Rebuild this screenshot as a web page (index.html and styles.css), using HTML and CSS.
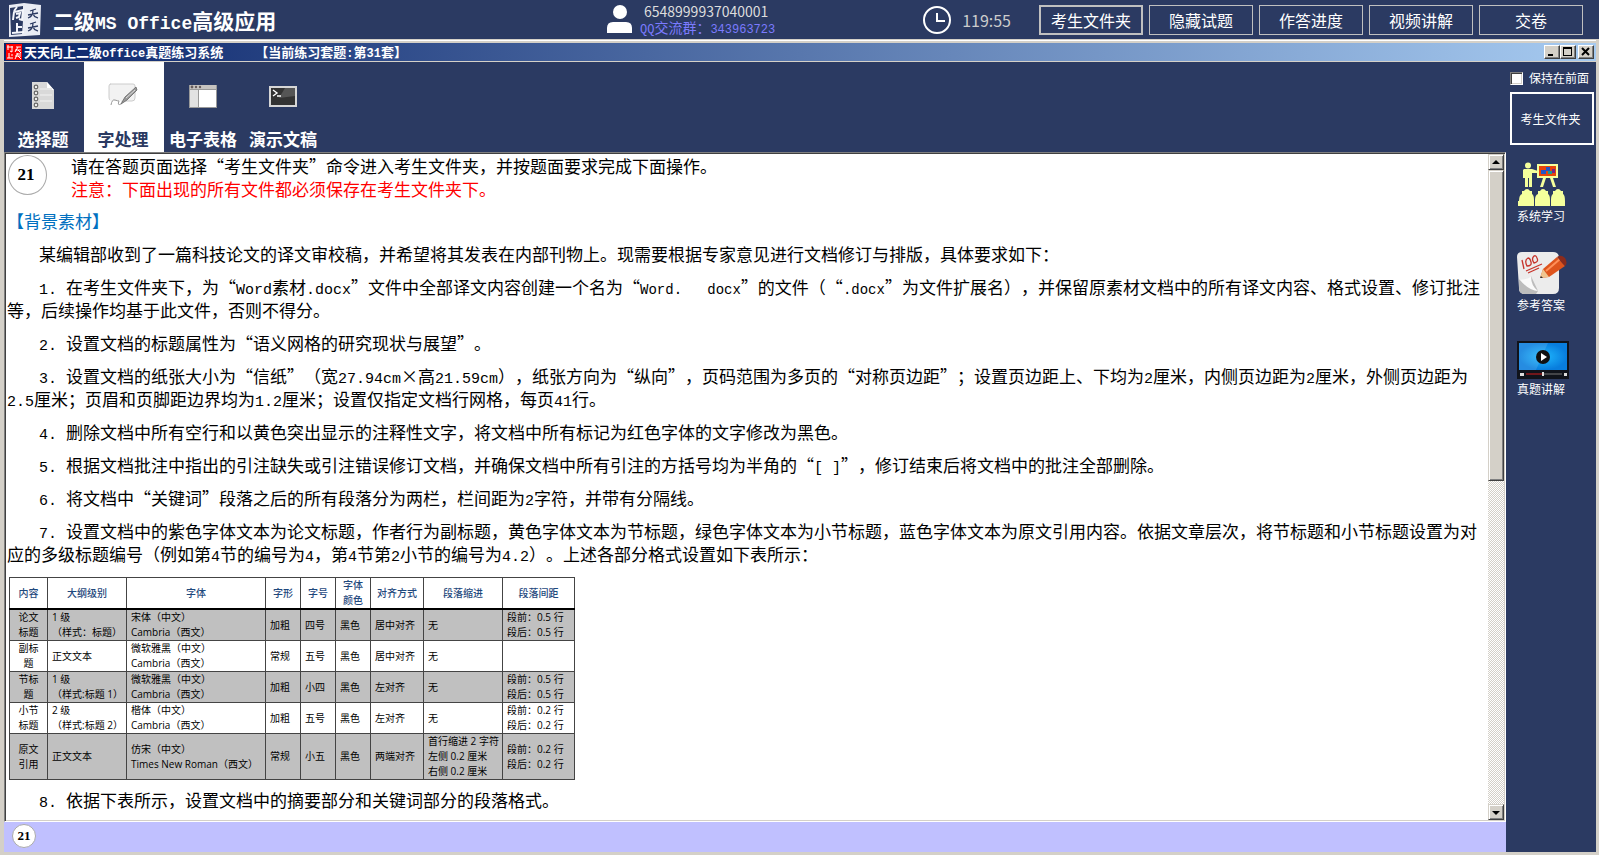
FILE: index.html
```html
<!DOCTYPE html>
<html lang="zh-CN">
<head>
<meta charset="utf-8">
<title>二级MS Office高级应用</title>
<link rel="stylesheet" href="styles.css">
</head>
<body>
<header class="topbar">
  <div class="brand">
    <svg class="logo" viewBox="0 0 34 34" aria-hidden="true">
      <path d="M1 2 16 0 33 2 32 32 17 33 1 34Z" fill="#e9ecf4"/>
      <path d="M2 5 15 3 15 18 14 31 3 32Z" fill="#2b3a62"/>
      <g fill="none" stroke="#f4f6fb" stroke-width="2">
        <path d="M9 4 6 8M5 17 6 9l9-2-1 10-3-1M8 11l4-1-1 4-3 1M9 20v9M9 24h5M4 30l12-1" />
      </g>
      <g fill="none" stroke="#2b3a62" stroke-width="1.3">
        <path d="M22 8l6-2M20 12l10-2M25 7c0 4-2 7-5 8M25 11c1 3 2 3 5 4M22 21l6-2M20 25l10-2M25 20c0 4-2 7-5 8M25 24c1 3 2 3 5 4"/>
      </g>
    </svg>
    <h1 class="brand-title">二级<span class="latin">MS Office</span>高级应用</h1>
  </div>
  <div class="user">
    <svg class="user-icon" viewBox="0 0 26 29" aria-hidden="true"><circle cx="13" cy="7" r="7" fill="#fff"/><path d="M0 28v-5q0-6 6-6h13q6 0 6 6v5Z" fill="#fff"/></svg>
    <div class="user-text">
      <div class="user-id">6548999937040001</div>
      <div class="user-group"><span class="latin">QQ</span>交流群：<span class="latin">343963723</span></div>
    </div>
  </div>
  <div class="timer">
    <svg class="clock" viewBox="0 0 30 30" aria-hidden="true"><circle cx="15" cy="15" r="13" fill="none" stroke="#fff" stroke-width="2"/><path d="M15 8v8h8" fill="none" stroke="#fff" stroke-width="2"/></svg>
    <span>119:55</span>
  </div>
  <nav class="actions">
    <button class="action current">考生文件夹</button>
    <button class="action">隐藏试题</button>
    <button class="action">作答进度</button>
    <button class="action">视频讲解</button>
    <button class="action">交卷</button>
  </nav>
</header>

<div class="window">
  <div class="titlebar">
    <svg class="seal" viewBox="0 0 16 16" aria-hidden="true"><path d="M0 0h16v16H0Z" fill="#f00"/><path d="M2 1v5M1 3h6M6 2v6l-2-1M3 9v5M1 14h6M5 11h2M10 3h5M9 6h6M12 3l-3 5M12 6l3 3M10 10h5M9 12h6M12 9l-3 6M12 12l3 3" fill="none" stroke="#fff" stroke-width="1"/></svg>
    <span class="title-name">天天向上二级<span class="latin">office</span>真题练习系统</span>
    <span class="title-set">【当前练习套题<span class="latin">:</span>第<span class="latin">31</span>套】</span>
    <div class="window-buttons">
      <button class="wbtn" aria-label="最小化"><svg viewBox="0 0 12 10"><path d="M2 7h5v2H2Z"/></svg></button>
      <button class="wbtn" aria-label="最大化"><svg viewBox="0 0 12 10"><path d="M1 0h9v9H1ZM2 2v6h7V2Z" fill-rule="evenodd"/></svg></button>
      <button class="wbtn close" aria-label="关闭"><svg viewBox="0 0 12 10"><path d="M2 1l7 7M9 1 2 8" stroke="#000" stroke-width="2"/></svg></button>
    </div>
  </div>

  <div class="workspace">
    <main class="main">
      <nav class="tabs">
        <button class="tab">
          <svg viewBox="0 0 32 32" aria-hidden="true"><path d="M5 2h15l7 8v19H5Z" fill="#d9d9d9"/><path d="M20 2l7 8h-5q-2 0-2-2Z" fill="#fff"/><path d="M13 9h12M13 15h12M13 21h12" stroke="#e6e6e6" stroke-width="2"/><g fill="#eee" stroke="#666" stroke-width="1.2"><circle cx="9" cy="7" r="1.8"/><circle cx="9" cy="13" r="1.8"/><circle cx="9" cy="19" r="1.8"/><circle cx="9" cy="25" r="1.8"/></g></svg>
          <span>选择题</span>
        </button>
        <button class="tab selected">
          <svg viewBox="0 0 32 32" aria-hidden="true"><path d="M3 4h23q2 0 2 2v12q0 3-3 3H14M3 20q-1-1-1-3V6q0-2 2-2" fill="#f2f2f2" stroke="#ccc"/><path d="M3 5h24v13L14 21H3Z" fill="#f2f2f2"/><path d="M29 7 18 17l-4 7 6-4L30 10Z" fill="#999" stroke="#666" stroke-width=".8"/><path d="M28 10 19 18" stroke="#ddd"/><path d="M4 25q1-6 4-5t4 1q-2 5 2 3" fill="none" stroke="#999"/></svg>
          <span>字处理</span>
        </button>
        <button class="tab">
          <svg viewBox="0 0 32 32" aria-hidden="true"><path d="M2 5h28v23H2Z" fill="#999"/><path d="M3 5h26v4H3Z" fill="#c6c3c0"/><path d="M3 10h8v17H3Z" fill="#e2e2e2"/><path d="M12 10h17v17H12Z" fill="#fff"/><g fill="#665c5c"><circle cx="5" cy="7" r="1.4"/><circle cx="9" cy="7" r="1.2"/><circle cx="13" cy="7" r="1.2"/></g></svg>
          <span>电子表格</span>
        </button>
        <button class="tab">
          <svg viewBox="0 0 32 32" aria-hidden="true"><path d="M2 6h28v21H2Z" fill="#d6d6d6"/><path d="M4 8h24v17H4Z" fill="#333"/><path d="M18 8h10v8L12 18Z" fill="#555"/><path d="M6 10l4 3-4 3M10 16h4" fill="none" stroke="#fff" stroke-width="1.4"/></svg>
          <span>演示文稿</span>
        </button>
      </nav>

      <section class="document">
        <article class="page">
          <div class="intro">
            <div class="number">21</div>
            <div>
              <p class="line">请在答题页面选择“考生文件夹”命令进入考生文件夹，并按题面要求完成下面操作。</p>
              <p class="line warning">注意：下面出现的所有文件都必须保存在考生文件夹下。</p>
            </div>
          </div>
          <h2 class="heading">【背景素材】</h2>
          <p class="para">某编辑部收到了一篇科技论文的译文审校稿，并希望将其发表在内部刊物上。现需要根据专家意见进行文档修订与排版，具体要求如下：</p>
          <p class="para"><span class="latin">1. </span>在考生文件夹下，为“<span class="latin">Word</span>素材<span class="latin">.docx</span>”文件中全部译文内容创建一个名为“<span class="latin filename">Word.&nbsp;&nbsp; docx</span>”的文件（“<span class="latin filename">.docx</span>”为文件扩展名），并保留原素材文档中的所有译文内容、格式设置、修订批注等，后续操作均基于此文件，否则不得分。</p>
          <p class="para"><span class="latin">2. </span>设置文档的标题属性为“语义网格的研究现状与展望”。</p>
          <p class="para"><span class="latin">3. </span>设置文档的纸张大小为“信纸”（宽<span class="latin">27.94cm</span>×高<span class="latin">21.59cm</span>），纸张方向为“纵向”，页码范围为多页的“对称页边距”；设置页边距上、下均为<span class="latin">2</span>厘米，内侧页边距为<span class="latin">2</span>厘米，外侧页边距为<span class="latin">2.5</span>厘米；页眉和页脚距边界均为<span class="latin">1.2</span>厘米；设置仅指定文档行网格，每页<span class="latin">41</span>行。</p>
          <p class="para"><span class="latin">4. </span>删除文档中所有空行和以黄色突出显示的注释性文字，将文档中所有标记为红色字体的文字修改为黑色。</p>
          <p class="para"><span class="latin">5. </span>根据文档批注中指出的引注缺失或引注错误修订文档，并确保文档中所有引注的方括号均为半角的“<span class="latin">[ ]</span>”，修订结束后将文档中的批注全部删除。</p>
          <p class="para"><span class="latin">6. </span>将文档中“关键词”段落之后的所有段落分为两栏，栏间距为<span class="latin">2</span>字符，并带有分隔线。</p>
          <p class="para"><span class="latin">7. </span>设置文档中的紫色字体文本为论文标题，作者行为副标题，黄色字体文本为节标题，绿色字体文本为小节标题，蓝色字体文本为原文引用内容。依据文章层次，将节标题和小节标题设置为对应的多级标题编号（例如第<span class="latin">4</span>节的编号为<span class="latin">4</span>，第<span class="latin">4</span>节第<span class="latin">2</span>小节的编号为<span class="latin">4.2</span>）。上述各部分格式设置如下表所示：</p>
          <table class="formats">
            <colgroup><col class="w-name"><col class="w-level"><col class="w-font"><col class="w-short"><col class="w-short"><col class="w-short"><col class="w-align"><col class="w-level"><col class="w-space"></colgroup>
            <thead>
              <tr><th>内容</th><th>大纲级别</th><th>字体</th><th>字形</th><th>字号</th><th>字体<br>颜色</th><th>对齐方式</th><th>段落缩进</th><th>段落间距</th></tr>
            </thead>
            <tbody>
              <tr><td class="mid">论文<br>标题</td><td>1 级<br>（样式：标题）</td><td>宋体（中文）<br>Cambria（西文）</td><td>加粗</td><td>四号</td><td>黑色</td><td>居中对齐</td><td>无</td><td>段前：0.5 行<br>段后：0.5 行</td></tr>
              <tr><td class="mid">副标<br>题</td><td>正文文本</td><td>微软雅黑（中文）<br>Cambria（西文）</td><td>常规</td><td>五号</td><td>黑色</td><td>居中对齐</td><td>无</td><td></td></tr>
              <tr><td class="mid">节标<br>题</td><td>1 级<br>（样式:标题 1）</td><td>微软雅黑（中文）<br>Cambria（西文）</td><td>加粗</td><td>小四</td><td>黑色</td><td>左对齐</td><td>无</td><td>段前：0.5 行<br>段后：0.5 行</td></tr>
              <tr><td class="mid">小节<br>标题</td><td>2 级<br>（样式:标题 2）</td><td>楷体（中文）<br>Cambria（西文）</td><td>加粗</td><td>五号</td><td>黑色</td><td>左对齐</td><td>无</td><td>段前：0.2 行<br>段后：0.2 行</td></tr>
              <tr><td class="mid">原文<br>引用</td><td>正文文本</td><td>仿宋（中文）<br>Times New Roman（西文）</td><td>常规</td><td>小五</td><td>黑色</td><td>两端对齐</td><td>首行缩进 2 字符<br>左侧 0.2 厘米<br>右侧 0.2 厘米</td><td>段前：0.2 行<br>段后：0.2 行</td></tr>
            </tbody>
          </table>
          <p class="para"><span class="latin">8. </span>依据下表所示，设置文档中的摘要部分和关键词部分的段落格式。</p>
        </article>
        <div class="scrollbar">
          <button class="sbtn" aria-label="向上滚动"><svg viewBox="0 0 12 12"><path d="M2 8 6 4l4 4Z"/></svg></button>
          <div class="track"><div class="thumb"></div></div>
          <button class="sbtn" aria-label="向下滚动"><svg viewBox="0 0 12 12"><path d="M2 5h8L6 9Z"/></svg></button>
        </div>
      </section>
      <footer class="pager"><button class="pager-item">21</button></footer>
    </main>

    <aside class="sidebar">
      <label class="keep"><input class="keep-box" type="checkbox">保持在前面</label>
      <button class="folder">考生文件夹</button>
      <button class="tool">
        <svg viewBox="0 0 48 44" aria-hidden="true"><g fill="#f5ff9c"><circle cx="11" cy="3.500" r="3"/><path d="M7 7h8l6 2v2h-6v14h-3v-9h-1v9H8V16H6V8Z"/><path d="M20 2h21v14H20ZM26 16h3l-3 9h-3ZM33 16h3l3 9h-3Z"/><path d="M5 32v-3h2q1-2 3-2t3 2h2v3q2 1 2 6v6H1v-5h1q0-6 3-7ZM21 32v-3h2q1-2 3-2t3 2h2v3q2 1 2 6v6H18v-6q0-5 3-6ZM36 32v-3h2q1-2 3-2t3 2h2v3q2 1 2 7v5H34v-6q0-5 2-6Z"/></g><path d="M22 4h17v10H22Z" fill="#e6450a"/><path d="M24 8h5v4h-5ZM29 5h4v4h-4Z" fill="#2454c5"/><path d="M31 9h4v3h-4Z" fill="#1c988c"/><path d="M35 7h3v4h-3Z" fill="#762387"/></svg>
        <span>系统学习</span>
      </button>
      <button class="tool answers">
        <svg viewBox="0 0 50 44" aria-hidden="true"><path d="M5 1h31q6 0 6 6v30q0 6-6 6H8q-6 0-6-6L0 6q0-5 5-5Z" fill="#ececec"/><path d="M2 28q12 3 12-3l7 15-2 3H8q-6 0-6-6Z" fill="#bdbdbd"/><path d="M2 28q10 1 12-3 0 10 7 15-9 0-19-12Z" fill="#fafafa"/><path d="M5 9l2 9M11 7q-4 2-1 8 5 0 4-4-1-4-3-4ZM17 5q-3 3 0 7 5-1 3-5-1-3-3-2ZM9 20l16-7M11 22l11-5" fill="none" stroke="#c7342c" stroke-width="1.3"/><path d="M23 27l3-9 14-12 8 9-16 11Z" fill="#de541d"/><path d="M29 20 43 8" stroke="#ff9059" stroke-width="2"/><path d="M40 6q4-3 8 1 3 5 0 8Z" fill="#8b2b1c"/><path d="M26 18l6 8-9 1Z" fill="#efc590"/><path d="M24 25l2 2-3 0Z" fill="#333"/></svg>
        <span>参考答案</span>
      </button>
      <button class="tool video">
        <svg viewBox="0 0 52 38" aria-hidden="true"><defs><radialGradient id="screen"><stop offset="0" stop-color="#20b9ff"/><stop offset="1" stop-color="#087ddd"/></radialGradient></defs><path d="M0 0h52v38H0Z" fill="#10131b"/><path d="M2 2h48v27H2Z" fill="url(#screen)"/><path d="M2 2h29L19 29H2Z" fill="#fff" opacity=".12"/><circle cx="26" cy="16" r="7" fill="#111"/><path d="M24 12l6 4-6 4Z" fill="#fff"/><path d="M9 33h16" stroke="#d21c1c"/><path d="M25 33h20" stroke="#777"/><path d="M3 32h4v3H3ZM47 32h3v3h-3ZM25 31h2v4h-2Z" fill="#ddd"/></svg>
        <span>真题讲解</span>
      </button>
    </aside>
  </div>
</div>
</body>
</html>
```

FILE: styles.css
```css
* { box-sizing: border-box; }

body {
  margin: 0;
  height: 100vh;
  display: flex;
  flex-direction: column;
  overflow: hidden;
  background: #2b3a62;
  color: #fff;
  font-family: "Noto Sans CJK SC", sans-serif;
  text-spacing-trim: space-all;
}

button {
  margin: 0;
  padding: 0;
  border: 0;
  background: none;
  color: inherit;
  font-family: inherit;
}

svg { display: block; }
p, h1, h2 { margin: 0; font-weight: 400; }
.latin { font-family: "Liberation Mono", monospace; font-size: 12px; line-height: 12px; }

/* Top bar */
.topbar {
  flex: none;
  height: 39px;
  padding: 0 16px 0 8px;
  display: flex;
  align-items: center;
}
.brand { flex: 0 0 599px; display: flex; align-items: center; gap: 11px; }
.logo { width: 34px; height: 34px; }
.brand-title { font-size: 21px; line-height: 34px; font-weight: 700; }
.brand-title .latin { font-size: 18px; }
.user { display: flex; align-items: center; gap: 7px; }
.user-icon { width: 26px; height: 29px; }
.user-id { padding-left: 4px; font-size: 14px; line-height: 16px; color: #ddd; }
.user-group { font-size: 14px; line-height: 16px; color: #7b7bff; }
.timer { margin-left: auto; padding-right: 28px; display: flex; align-items: center; gap: 10px; font-size: 16px; color: #ccc; }
.clock { width: 30px; height: 30px; }
.actions { display: flex; gap: 6px; }
.action { width: 104px; height: 30px; border: 1px solid #c0c0c0; font-size: 16px; line-height: 24px; }
.action.current { border-width: 2px; }

/* Window frame */
.window {
  flex: 1;
  min-height: 0;
  display: flex;
  flex-direction: column;
  border: solid #d4d0c8;
  border-width: 1px 3px 3px 4px;
  background: #d4d0c8;
  box-shadow: inset 0 1px #fff;
}
.titlebar {
  flex: none;
  height: 18px;
  margin: 3px 0 1px;
  padding: 0 2px;
  display: flex;
  align-items: center;
  background: linear-gradient(90deg, #0a246a, #a6caf0);
  font-size: 13px;
  font-weight: 700;
  line-height: 18px;
}
.seal { width: 16px; height: 16px; margin-right: 2px; }
.title-set { margin-left: 32px; }
.window-buttons { margin-left: auto; display: flex; }
.wbtn {
  width: 16px;
  height: 14px;
  padding: 1px;
  background: #d4d0c8;
  border: 1px solid;
  border-color: #fff #404040 #404040 #fff;
  box-shadow: inset -1px -1px #808080;
}
.wbtn svg { width: 12px; height: 10px; }
.wbtn.close { margin-left: 2px; }

.workspace { flex: 1; min-height: 0; display: flex; background: #2b3a62; }
.main { flex: 1; min-width: 0; display: flex; flex-direction: column; }

/* Tabs */
.tabs { flex: none; display: flex; height: 90px; }
.tab {
  width: 80px;
  padding: 18px 2px 0 0;
  display: flex;
  flex-direction: column;
  align-items: center;
  justify-content: flex-start;
  gap: 15px;
  font-size: 17px;
  line-height: 24px;
  font-weight: 700;
  white-space: nowrap;
}
.tab svg { width: 32px; height: 32px; }
.tab.selected { background: #fff; color: #2b3a62; }

/* Document */
.document {
  flex: 1;
  min-height: 0;
  display: flex;
  background: #fff;
  color: #000;
  border: 1px solid;
  border-color: #808080 #fff #fff #808080;
  box-shadow: inset 1px 1px #404040, inset -1px -1px #d4d0c8;
  padding: 1px;
}
.page { flex: 1; min-width: 0; overflow: hidden; padding-left: 1px; font-size: 17px; line-height: 23px; font-weight: 300; }
.page .latin { font-size: 15px; text-indent: 0; white-space: pre-wrap; }
.page .filename { font-size: 14px; }
.intro { display: flex; gap: 24px; margin-bottom: 9px; padding-left: 1px; }
.number {
  flex: none;
  width: 39px;
  height: 40px;
  margin-top: 1px;
  padding-right: 3px;
  border: 1px solid #aaa;
  border-radius: 50%;
  font: 700 17px/38px "Liberation Serif", serif;
  text-align: center;
}
.warning { color: #f00; }
.heading { margin-bottom: 10px; font-size: 17px; color: #0070c0; }
.para { margin-bottom: 10px; text-indent: 32px; }

.formats {
  width: 566px;
  margin: 12px 0 8px 2px;
  table-layout: fixed;
  border-collapse: collapse;
  font-family: "Open Sans", "Noto Sans CJK SC", sans-serif;
  font-size: 10px;
  line-height: 15px;
  font-weight: 400;
  white-space: nowrap;
}
.formats th, .formats td { border: 1px solid #444; padding: 0 0 0 4px; text-align: left; height: 31px; }
.formats th { padding: 0; text-align: center; color: #1f497d; font-weight: 500; }
.formats .mid { padding: 0; text-align: center; }
.formats thead tr { border-bottom: 2px solid #000; }
.formats tbody tr:nth-child(odd) { background: #c0c0c0; }
.w-name { width: 38px; }
.w-level { width: 79px; }
.w-font { width: 139px; }
.w-short { width: 35px; }
.w-align { width: 53px; }
.w-space { width: 72px; }

/* Scrollbar */
.scrollbar { flex: none; width: 16px; display: flex; flex-direction: column; }
.sbtn, .thumb {
  background: #d4d0c8;
  border: 1px solid;
  border-color: #d4d0c8 #404040 #404040 #d4d0c8;
  box-shadow: inset 1px 1px #fff, inset -1px -1px #808080;
}
.sbtn { flex: none; height: 16px; padding: 1px; }
.sbtn svg { width: 12px; height: 12px; }
.track { flex: 1; background: repeating-conic-gradient(#d4d0c8 0 25%, #fff 0 50%) 0 0 / 2px 2px; }
.thumb { height: 49%; }

/* Question pager */
.pager { flex: none; height: 30px; padding: 2px 8px; background: #c0c0ff; }
.pager-item {
  display: block;
  width: 24px;
  height: 24px;
  border: 1px solid #aaa;
  border-radius: 50%;
  background: #fff;
  color: #000;
  font: 700 13px/22px "Liberation Serif", serif;
}

/* Sidebar */
.sidebar { flex: 0 0 90px; padding: 7px 2px 0 4px; font-size: 12px; }
.keep { display: flex; align-items: center; gap: 6px; line-height: 18px; white-space: nowrap; }
.keep-box {
  appearance: none;
  width: 13px;
  height: 13px;
  margin: 0;
  background: #fff;
  border: 1px solid;
  border-color: #808080 #fff #fff #808080;
  box-shadow: inset 1px 1px #404040, inset -1px -1px #d4d0c8;
}
.folder { display: block; width: 100%; height: 53px; margin-top: 5px; padding-right: 3px; border: 2px solid #fff; font-size: 12px; line-height: 18px; }
.tool { display: flex; flex-direction: column; align-items: flex-start; gap: 1px; margin: 17px 0 0 7px; width: 52px; font-size: 12px; line-height: 18px; }
.tool svg { width: 48px; height: 44px; }
.tool.answers { margin-top: 26px; }
.tool.answers svg { width: 50px; }
.tool.video { margin-top: 27px; }
.tool.video svg { width: 52px; height: 38px; }
```
